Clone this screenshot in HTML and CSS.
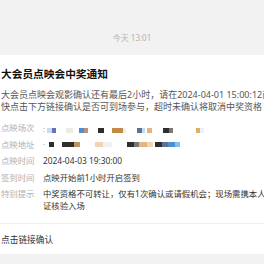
FILE: index.html
```html
<!DOCTYPE html>
<html lang="zh-CN">
<head>
    <meta charset="UTF-8">
    <meta name="viewport" content="width=device-width, initial-scale=1.0">
    <title>大会员点映会中奖通知</title>
    <link rel="stylesheet" href="styles.css">
</head>
<body>
    <div class="time">今天 13:01</div>

    <div class="card">
        <div class="card-body">
            <h1 class="title">大会员点映会中奖通知</h1>
            <p class="intro">
                <span class="line">大会员点映会观影确认还有最后2小时，请在2024-04-01 15:00:12前</span>
                <span class="line">快点击下方链接确认是否可到场参与，超时未确认将取消中奖资格</span>
            </p>

            <div class="fields">
                <div class="field">
                    <div class="label">点映场次</div>
                    <div class="value mosaic low">
                        <span class="dot">:</span>
                        <span class="px c1 w5"></span><span class="px c2 w4"></span>
                        <span class="gap w10"></span><span class="px c3 w7"></span>
                        <span class="gap w6"></span><span class="px c4 w5"></span><span class="px c5 w4"></span>
                        <span class="gap w10"></span><span class="px c6 w6"></span>
                        <span class="gap w8"></span><span class="px c7 w11"></span><span class="px c8 w3"></span>
                        <span class="gap w11"></span><span class="px c9 w5"></span><span class="px c1 w3"></span>
                        <span class="gap w2"></span><span class="px c10 w5"></span>
                        <span class="gap w11"></span><span class="px c6 w6"></span><span class="px c11 w4"></span>
                        <span class="gap w23"></span><span class="px c12 w4"></span><span class="px c8 w4"></span>
                    </div>
                </div>
                <div class="field">
                    <div class="label">点映地址</div>
                    <div class="value mosaic">
                        <span class="dot">·</span>
                        <span class="gap w2"></span><span class="px c6 w5"></span>
                        <span class="gap w8"></span><span class="px c6 w12"></span><span class="px c13 w6"></span>
                        <span class="gap w15"></span><span class="px c14 w8"></span><span class="px c15 w9"></span>
                        <span class="gap w15"></span><span class="px c6 w7"></span><span class="px c11 w5"></span><span class="px c10 w8"></span><span class="px c14 w6"></span>
                        <span class="gap w2"></span><span class="px c6 w7"></span><span class="px c9 w6"></span><span class="px c4 w7"></span><span class="px c16 w5"></span>
                    </div>
                </div>
                <div class="field">
                    <div class="label">点映时间</div>
                    <div class="value">2024-04-03 19:30:00</div>
                </div>
                <div class="field">
                    <div class="label">签到时间</div>
                    <div class="value">点映开始前1小时开启签到</div>
                </div>
                <div class="field">
                    <div class="label">特别提示</div>
                    <div class="value">中奖资格不可转让，仅有1次确认或请假机会；现场需携本人身<br>证核验入场</div>
                </div>
            </div>
        </div>
        <div class="card-link">点击链接确认</div>
    </div>
</body>
</html>
```

FILE: styles.css
```css
html, body {
    margin: 0;
    padding: 0;
}
body {
    font-family: "Noto Sans", "Noto Sans CJK SC", sans-serif;
    background-color: #f2f2f2;
    overflow: hidden;
    height: 264px;
}
.time {
    padding-top: 32px;
    height: 23px;
    text-align: center;
    font-size: 8px;
    line-height: 12px;
    color: #b3b3b3;
}
.card {
    background: white;
    width: 300px;
}
.card-body {
    padding: 12px 0 11px 1px;
    border-bottom: 1px solid #efefef;
}
.title {
    margin: 0;
    font-size: 10.7px;
    line-height: 14px;
    font-weight: bold;
    color: #111;
}
.intro {
    margin: 8px 0 9px;
    font-size: 9px;
    line-height: 12px;
    color: #555;
}
.line {
    display: block;
    white-space: nowrap;
}
.fields {
    display: flex;
    flex-direction: column;
    gap: 4.5px;
    font-size: 8.4px;
    line-height: 12px;
}
.field {
    display: flex;
}
.label {
    width: 42px;
    flex-shrink: 0;
    color: #b0b0b0;
}
.value {
    color: #333;
    white-space: nowrap;
}
.mosaic {
    display: flex;
    align-items: center;
    height: 12px;
}
.mosaic.low {
    padding-top: 4px;
    height: 8px;
}
.dot {
    width: 4px;
    color: #999;
    font-size: 7px;
}
.px {
    display: inline-block;
    height: 5px;
}
.gap {
    display: inline-block;
}
.w2 { width: 2px; }
.w3 { width: 3px; }
.w4 { width: 4px; }
.w5 { width: 5px; }
.w6 { width: 6px; }
.w7 { width: 7px; }
.w8 { width: 8px; }
.w9 { width: 9px; }
.w10 { width: 10px; }
.w11 { width: 11px; }
.w12 { width: 12px; }
.w15 { width: 15px; }
.w23 { width: 23px; }
.c1 { background: #c9dcf3; }
.c2 { background: #6472b6; }
.c3 { background: #e9eee0; }
.c4 { background: #4b8fd0; }
.c5 { background: #bf8f80; }
.c6 { background: #2e2e2e; }
.c7 { background: #c38a45; }
.c8 { background: #e8f0f8; }
.c9 { background: #5f7090; }
.c10 { background: #e1b57e; }
.c11 { background: #777; }
.c12 { background: #e2b062; }
.c13 { background: #c29162; }
.c14 { background: #f2d2b2; }
.c15 { background: #f1f1f1; }
.c16 { background: #82c2f0; }
.card-link {
    padding: 10px 0 8px 1px;
    font-size: 8.7px;
    line-height: 12px;
    color: #333;
}
```
